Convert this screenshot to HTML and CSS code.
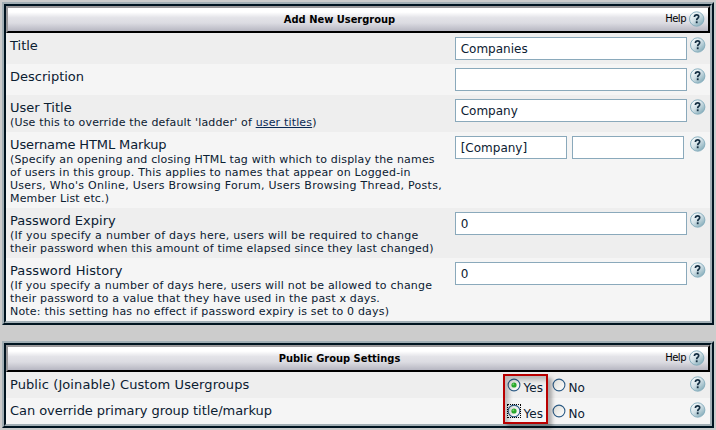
FILE: index.html
```
<!DOCTYPE html>
<html lang="en">
<head>
<meta charset="utf-8">
<title>Add New Usergroup</title>
<link rel="stylesheet" href="styles.css">
</head>
<body>
<svg class="defs" width="0" height="0">
  <defs>
    <linearGradient id="ball" x1="0.15" y1="0.1" x2="0.85" y2="0.9">
      <stop offset="0" stop-color="#f7fbfc"/>
      <stop offset="0.45" stop-color="#d3e1e7"/>
      <stop offset="1" stop-color="#86adba"/>
    </linearGradient>
    <linearGradient id="well" x1="0" y1="0" x2="1" y2="1">
      <stop offset="0" stop-color="#dcdcd7"/>
      <stop offset="1" stop-color="#ffffff"/>
    </linearGradient>
    <symbol id="help" viewBox="0 0 16 16">
      <circle cx="7.7" cy="8" r="7.2" fill="url(#ball)" stroke="#7fa9ba" stroke-width="0.9"/>
      <path d="M5.5 6V5.2Q5.8 3.9 7.6 3.9Q9.7 3.9 9.7 5.6Q9.7 6.8 8.5 7.5Q7.7 8 7.7 9.3" fill="none" stroke="#142e42" stroke-width="1.7"/>
      <rect x="6.8" y="10.3" width="1.8" height="1.9" fill="#142e42"/>
    </symbol>
    <symbol id="radio" viewBox="0 0 14 14">
      <circle cx="7" cy="7" r="5.9" fill="url(#well)" stroke="#2c5b85" stroke-width="1.1"/>
    </symbol>
    <symbol id="radio-on" viewBox="0 0 14 14">
      <circle cx="7" cy="7" r="5.9" fill="url(#well)" stroke="#2c5b85" stroke-width="1.1"/>
      <circle cx="7" cy="7" r="2.6" fill="#29a82b"/>
      <circle cx="6.3" cy="6.3" r="1" fill="#6bd465"/>
    </symbol>
  </defs>
</svg>

<section class="panel">
  <header class="bar"><h2>Add New Usergroup</h2><span class="bar-help">Help <svg class="help"><use href="#help"/></svg></span></header>
  <div class="row">
    <div class="label"><div class="name">Title</div></div>
    <div class="control"><div class="field">Companies</div></div>
    <svg class="help"><use href="#help"/></svg>
  </div>
  <div class="row">
    <div class="label"><div class="name">Description</div></div>
    <div class="control"><div class="field"></div></div>
    <svg class="help"><use href="#help"/></svg>
  </div>
  <div class="row">
    <div class="label"><div class="name">User Title</div>
      <div class="note">(Use this to override the default 'ladder' of <a>user titles</a>)</div></div>
    <div class="control"><div class="field">Company</div></div>
    <svg class="help"><use href="#help"/></svg>
  </div>
  <div class="row">
    <div class="label"><div class="name tight">Username HTML Markup</div>
      <div class="note">(Specify an opening and closing HTML tag with which to display the names</div>
      <div class="note wide">of users in this group. This applies to names that appear on Logged-in</div>
      <div class="note wider">Users, Who's Online, Users Browsing Forum, Users Browsing Thread, Posts,</div>
      <div class="note">Member List etc.)</div></div>
    <div class="control"><div class="field half">[Company]</div><div class="field half"></div></div>
    <svg class="help"><use href="#help"/></svg>
  </div>
  <div class="row">
    <div class="label"><div class="name">Password Expiry</div>
      <div class="note wider">(If you specify a number of days here, users will be required to change</div>
      <div class="note">their password when this amount of time elapsed since they last changed)</div></div>
    <div class="control"><div class="field">0</div></div>
    <svg class="help"><use href="#help"/></svg>
  </div>
  <div class="row">
    <div class="label"><div class="name loose">Password History</div>
      <div class="note wide">(If you specify a number of days here, users will not be allowed to change</div>
      <div class="note">their password to a value that they have used in the past x days.</div>
      <div class="note wide">Note: this setting has no effect if password expiry is set to 0 days)</div></div>
    <div class="control"><div class="field">0</div></div>
    <svg class="help"><use href="#help"/></svg>
  </div>
</section>

<section class="panel">
  <header class="bar"><h2>Public Group Settings</h2><span class="bar-help">Help <svg class="help"><use href="#help"/></svg></span></header>
  <div class="row short">
    <div class="label"><div class="name loose">Public (Joinable) Custom Usergroups</div></div>
    <div class="control choices"><svg class="radio"><use href="#radio-on"/></svg><span class="yes">Yes</span><svg class="radio"><use href="#radio"/></svg><span>No</span></div>
    <svg class="help"><use href="#help"/></svg>
  </div>
  <div class="row short">
    <div class="label"><div class="name snug">Can override primary group title/markup</div></div>
    <div class="control choices"><svg class="radio focused"><use href="#radio-on"/></svg><span class="yes">Yes</span><svg class="radio"><use href="#radio"/></svg><span>No</span></div>
    <svg class="help"><use href="#help"/></svg>
  </div>
  <div class="highlight"></div>
</section>
</body>
</html>
```
FILE: styles.css
```
* { box-sizing: border-box; }

body {
  margin: 0;
  padding: 2px;
  height: 430px;
  overflow: hidden;
  background: #ccc;
  color: #0b2031;
  font-family: "DejaVu Sans", Verdana, sans-serif;
}

.defs { position: absolute; }

.panel {
  position: relative;
  width: 712px;
  margin-bottom: 16px;
  border: 2px solid;
  border-color: #a2afb5 #001420 #001420 #a2afb5;
}

.panel::before {
  content: "";
  position: absolute;
  inset: 0;
  border: 2px solid;
  border-color: #001420 #a2afb5 #a2afb5 #001420;
  pointer-events: none;
}

.bar {
  position: relative;
  display: flex;
  align-items: center;
  justify-content: center;
  height: 27px;
  margin: 2px 2px 0;
  padding-right: 37px;
  border: 2px solid;
  border-color: #9b999b #000 #000 #9b999b;
  background: linear-gradient(#fff 0, #fff 18%, #e3e3e8 42%, #dcdce2 65%, #b7b7c2 100%);
  color: #000;
}

.bar h2 {
  margin: 0;
  font: bold 11px/14px "DejaVu Sans Condensed", "DejaVu Sans", sans-serif;
}

.bar-help {
  position: absolute;
  right: 3px;
  top: 3px;
  display: flex;
  align-items: center;
  gap: 3px;
  font-size: 10px;
  line-height: 16px;
  letter-spacing: -0.5px;
}

.help { flex: none; display: block; width: 16px; height: 16px; }

.row {
  display: flex;
  align-items: flex-start;
  margin: 0 2px;
  padding: 4px;
  background: #eee;
}

.row:nth-child(odd) { background: #f5f5f5; }
.row:last-of-type { margin-bottom: 2px; }

.label { width: 446px; padding-top: 1px; margin-bottom: -1px; white-space: nowrap; }
.name { font-size: 13px; line-height: 16px; }
.tight { letter-spacing: -0.12px; }
.snug { letter-spacing: -0.05px; }
.loose { letter-spacing: 0.09px; }
.note { font-size: 11px; line-height: 13px; letter-spacing: 0.165px; }
.wide { letter-spacing: 0.2px; }
.wider { letter-spacing: 0.265px; }
.note a { color: #0a2a55; text-decoration: underline; }

.control { display: flex; gap: 5px; width: 236px; }

.field {
  width: 232px;
  height: 23px;
  padding: 1px 5px 0;
  border: 1px solid #8aa9bb;
  background: #fff;
  font-size: 12px;
  line-height: 21px;
}

.half { width: 112px; }

.short { height: 26px; }
.panel:last-child .row:nth-of-type(2) { margin-bottom: 2px; }
.choices { padding: 2px 0 0 52px; gap: 0; font-size: 12px; line-height: 20px; }
.radio { display: block; width: 14px; height: 14px; margin-right: 3px; }
.focused { outline: 1px dotted #000; outline-offset: -1px; }
.yes { width: 28px; }

.highlight {
  position: absolute;
  left: 499px;
  top: 31px;
  width: 45px;
  height: 50px;
  border: 2px solid #b90000;
  box-shadow: 4px 4px 4px rgba(0,0,0,.3), inset 4px 4px 4px rgba(0,0,0,.22);
}
```
